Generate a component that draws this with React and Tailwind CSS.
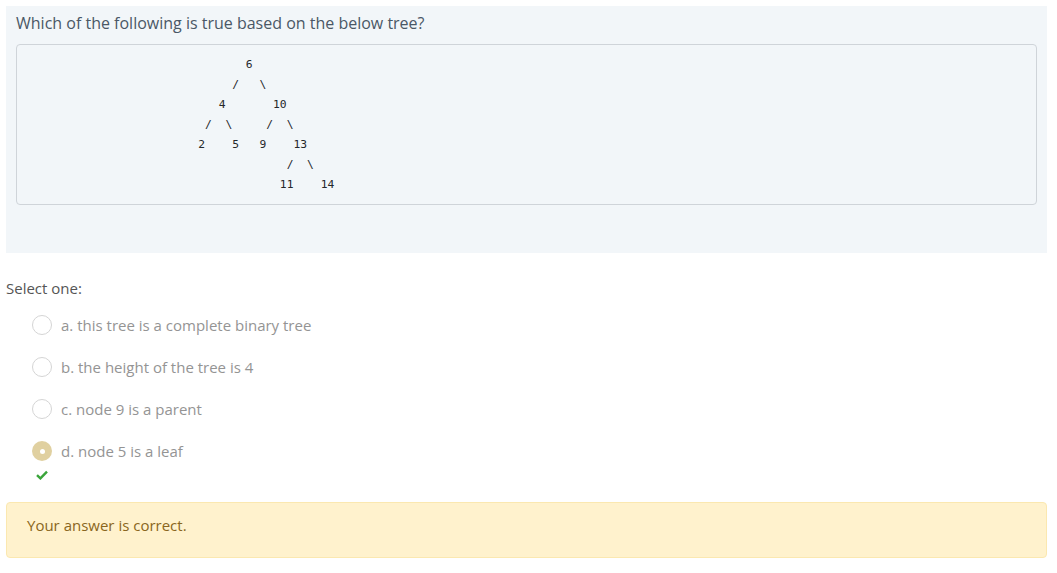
import React from "react";

const tree = [
  "                               6",
  "                             /   \\",
  "                           4       10",
  "                         /  \\     /  \\",
  "                        2    5   9    13",
  "                                     /  \\",
  "                                    11    14",
].join("\n");

const options = [
  { id: "a", text: "a. this tree is a complete binary tree" },
  { id: "b", text: "b. the height of the tree is 4" },
  { id: "c", text: "c. node 9 is a parent" },
  { id: "d", text: "d. node 5 is a leaf", checked: true },
];

function Radio({ checked }) {
  if (checked) {
    return (
      <span className="flex h-5 w-5 items-center justify-center rounded-full bg-[#e0d0a0]">
        <span className="h-[5px] w-[5px] rounded-full bg-white" />
      </span>
    );
  }
  return <span className="block h-5 w-5 rounded-full border border-[#d5d5d5] bg-white" />;
}

export default function App() {
  return (
    <div className="min-h-screen bg-white pt-[6px] pl-[6px] pr-[10px] font-['Open_Sans',sans-serif]">
      {/* question text */}
      <div className="bg-[#f2f6f9] px-[10px] pt-[6px] pb-[48px]">
        <p className="text-[16px] leading-[22px] text-[#4a5866]">
          Which of the following is true based on the below tree?
        </p>
        <pre className="mt-[10px] rounded-[4px] border border-[#cfd4d9] pt-[10px] pb-[9px] pl-[18px] font-['DejaVu_Sans_Mono',monospace] text-[11.3px] leading-[20px] text-[#25282b]">
          {tree}
        </pre>
      </div>

      {/* answer */}
      <div className="mt-[25px] text-[15px] leading-[20px] text-[#555]">Select one:</div>
      <div className="mt-[17px] flex flex-col gap-[22px] pl-[26px]">
        {options.map((o) => (
          <div key={o.id} className="relative flex items-center gap-[9px]">
            <Radio checked={o.checked} />
            <span className="text-[15px] leading-[20px] text-[#949494]">{o.text}</span>
            {o.checked && (
              <svg
                className="absolute left-[4px] top-[29px]"
                width="12"
                height="10"
                viewBox="0 0 12 10"
              >
                <path
                  d="M1 5.2 L4.4 8.4 L11 1.6"
                  fill="none"
                  stroke="#3aa53a"
                  strokeWidth="2.4"
                />
              </svg>
            )}
          </div>
        ))}
      </div>

      {/* feedback */}
      <div className="mt-[41px] rounded-[4px] border border-[#fbe8b0] bg-[#fff2cd] px-[20px] pt-[8px] pb-[18px] text-[15px] leading-[28px] text-[#8a6620]">
        Your answer is correct.
      </div>
    </div>
  );
}
